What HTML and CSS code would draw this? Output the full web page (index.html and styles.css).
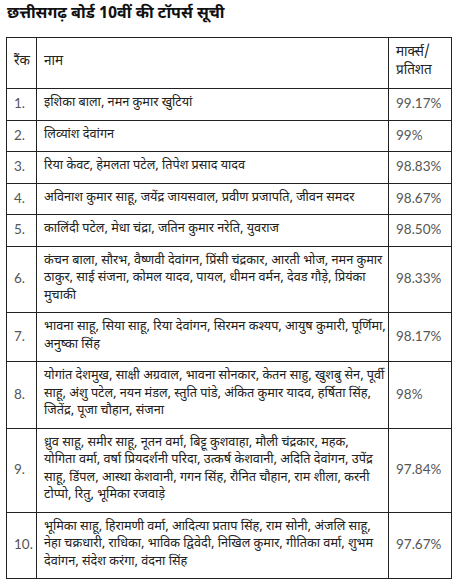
FILE: index.html
```html
<!DOCTYPE html>
<html lang="hi">
<head>
<meta charset="utf-8">
<link rel="stylesheet" href="styles.css">
</head>
<body>
<h2 class="title">छत्तीसगढ़ बोर्ड 10वीं की टॉपर्स सूची</h2>
<table class="toppers">
  <colgroup>
    <col class="c-rank">
    <col class="c-name">
    <col class="c-marks">
  </colgroup>
  <thead>
    <tr><th>रैंक</th><th>नाम</th><th>मार्क्स/<br>प्रतिशत</th></tr>
  </thead>
  <tbody>
    <tr><td class="num">1.</td><td class="names">इशिका बाला, नमन कुमार खुटियां</td><td class="num">99.17%</td></tr>
    <tr><td class="num">2.</td><td class="names">लिव्यांश देवांगन</td><td class="num">99%</td></tr>
    <tr><td class="num">3.</td><td class="names">रिया केवट, हेमलता पटेल, तिपेश प्रसाद यादव</td><td class="num">98.83%</td></tr>
    <tr><td class="num">4.</td><td class="names">अविनाश कुमार साहू, जयेंद्र जायसवाल, प्रवीण प्रजापति, जीवन समदर</td><td class="num">98.67%</td></tr>
    <tr><td class="num">5.</td><td class="names">कालिंदी पटेल, मेधा चंद्रा, जतिन कुमार नरेति, युवराज</td><td class="num">98.50%</td></tr>
    <tr><td class="num">6.</td><td class="names">कंचन बाला, सौरभ, वैष्णवी देवांगन, प्रिंसी चंद्रकार, आरती भोज, नमन कुमार<br>ठाकुर, साई संजना, कोमल यादव, पायल, धीमन वर्मन, देवड गौड़े, प्रियंका<br>मुचाकी</td><td class="num">98.33%</td></tr>
    <tr><td class="num">7.</td><td class="names">भावना साहू, सिया साहू, रिया देवांगन, सिरमन कश्यप, आयुष कुमारी, पूर्णिमा,<br>अनुष्का सिंह</td><td class="num">98.17%</td></tr>
    <tr><td class="num">8.</td><td class="names">योगांत देशमुख, साक्षी अग्रवाल, भावना सोनकार, केतन साहु, खुशबु सेन, पूर्वी<br>साहू, अंशु पटेल, नयन मंडल, स्तुति पांडे, अंकित कुमार यादव, हर्षिता सिंह,<br>जितेंद्र, पूजा चौहान, संजना</td><td class="num">98%</td></tr>
    <tr><td class="num">9.</td><td class="names">ध्रुव साहू, समीर साहू, नूतन वर्मा, बिट्टू कुशवाहा, मौली चंद्रकार, महक,<br>योगिता वर्मा, वर्षा प्रियदर्शनी परिदा, उत्कर्ष केशवानी, अदिति देवांगन, उपेंद्र<br>साहू, डिंपल, आस्था केशवानी, गगन सिंह, रौनित चौहान, राम शीला, करनी<br>टोप्पो, रितु, भूमिका रजवाड़े</td><td class="num">97.84%</td></tr>
    <tr><td class="num">10.</td><td class="names">भूमिका साहू, हिरामणी वर्मा, आदित्या प्रताप सिंह, राम सोनी, अंजलि साहू,<br>नेहा चक्रधारी, राधिका, भाविक द्विवेदी, निखिल कुमार, गीतिका वर्मा, शुभम<br>देवांगन, संदेश करंगा, वंदना सिंह</td><td class="num">97.67%</td></tr>
  </tbody>
</table>
</body>
</html>
```

FILE: styles.css
```css
html, body {
  margin: 0;
  padding: 0;
  background: #ffffff;
}
body {
  padding: 4px 8px 0 6px;
  font-family: "Noto Sans Devanagari", "Noto Sans", "Lohit Devanagari", sans-serif;
  color: #222;
}
.title {
  margin: 0 0 11px 1px;
  font-size: 16px;
  line-height: 22px;
  font-weight: 700;
  color: #111;
}
.toppers {
  width: 446px;
  border-collapse: collapse;
  table-layout: fixed;
}
.c-rank { width: 30px; }
.c-marks { width: 63px; }
.toppers th,
.toppers td {
  border: 1.5px solid #222;
  padding: 6px 3px 7px 7px;
  font-size: 13px;
  line-height: 17.5px;
  font-weight: 400;
  text-align: left;
  vertical-align: middle;
  color: #222;
}
.toppers th {
  padding-top: 7px;
  padding-bottom: 8px;
  font-size: 13.5px;
}
.toppers td.names {
  font-size: 12.7px;
  white-space: nowrap;
}
.toppers td.num {
  font-family: "Lato", "Open Sans", sans-serif;
  font-size: 13.5px;
  color: #555;
}
```
